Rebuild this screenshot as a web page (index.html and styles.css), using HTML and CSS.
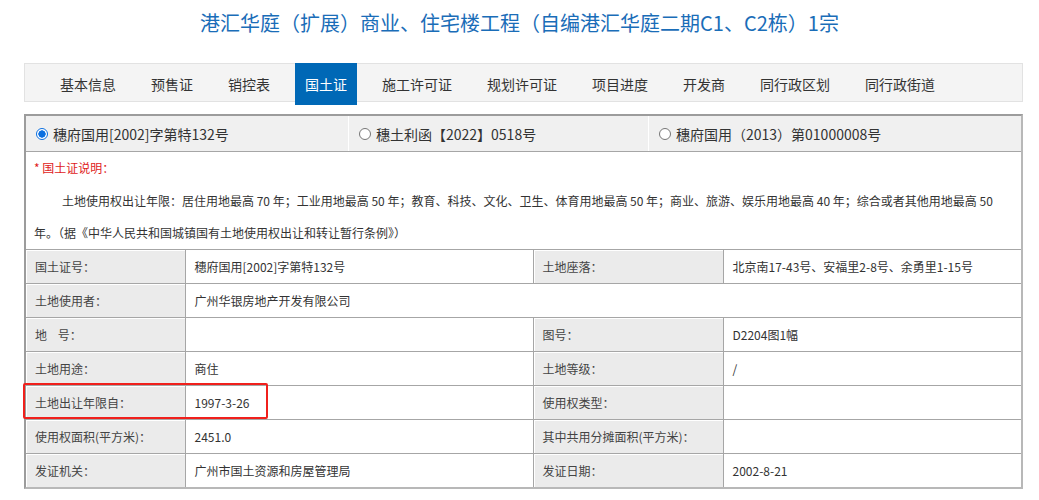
FILE: index.html
```html
<!DOCTYPE html>
<html lang="zh-CN">
<head>
<meta charset="utf-8">
<title>国土证</title>
<link rel="stylesheet" href="styles.css">
</head>
<body>
<h1 class="title">港汇华庭（扩展）商业、住宅楼工程（自编港汇华庭二期C1、C2栋）1宗</h1>

<div class="nav">
  <ul class="tabs">
    <li class="tab">基本信息</li>
    <li class="tab">预售证</li>
    <li class="tab">销控表</li>
    <li class="tab active">国土证</li>
    <li class="tab">施工许可证</li>
    <li class="tab">规划许可证</li>
    <li class="tab">项目进度</li>
    <li class="tab">开发商</li>
    <li class="tab">同行政区划</li>
    <li class="tab">同行政街道</li>
  </ul>
</div>

<div class="cert">
  <div class="radios">
    <label class="opt opt1"><span class="radio checked"></span>穗府国用[2002]字第特132号</label>
    <label class="opt opt2"><span class="radio"></span>穗土利函【2022】0518号</label>
    <label class="opt opt3"><span class="radio"></span>穗府国用（2013）第01000008号</label>
  </div>
  <div class="desc">
    <p class="desc-title">* 国土证说明：</p>
    <p class="desc-text">土地使用权出让年限：居住用地最高 70 年；工业用地最高 50 年；教育、科技、文化、卫生、体育用地最高 50 年；商业、旅游、娱乐用地最高 40 年；综合或者其他用地最高 50 年。（据《中华人民共和国城镇国有土地使用权出让和转让暂行条例》）</p>
  </div>
  <table class="info">
    <colgroup>
      <col class="c1"><col class="c2"><col class="c3"><col class="c4">
    </colgroup>
    <tr>
      <th>国土证号：</th><td>穗府国用[2002]字第特132号</td>
      <th>土地座落：</th><td>北京南17-43号、安福里2-8号、余勇里1-15号</td>
    </tr>
    <tr>
      <th>土地使用者：</th><td colspan="3">广州华银房地产开发有限公司</td>
    </tr>
    <tr>
      <th>地&nbsp;&nbsp;&nbsp;&nbsp;号：</th><td></td>
      <th>图号：</th><td>D2204图1幅</td>
    </tr>
    <tr>
      <th>土地用途：</th><td>商住</td>
      <th>土地等级：</th><td>/</td>
    </tr>
    <tr>
      <th>土地出让年限自：</th><td>1997-3-26</td>
      <th>使用权类型：</th><td></td>
    </tr>
    <tr>
      <th>使用权面积(平方米)：</th><td>2451.0</td>
      <th>其中共用分摊面积(平方米)：</th><td></td>
    </tr>
    <tr>
      <th>发证机关：</th><td>广州市国土资源和房屋管理局</td>
      <th>发证日期：</th><td>2002-8-21</td>
    </tr>
  </table>
  <div class="mark"></div>
</div>
</body>
</html>
```

FILE: styles.css
```css
html, body {
  margin: 0;
  padding: 0;
  background: #fff;
}
body {
  font-family: "Noto Sans CJK JP", "Noto Sans CJK SC", sans-serif;
  color: #333;
}
.title {
  margin: 8px 0 0;
  font-size: 20px;
  font-weight: normal;
  line-height: 30px;
  color: #1a6db8;
  text-align: center;
}
.nav {
  margin: 25px 16px 0 24px;
  height: 37px;
  border: 1px solid #e2e2e2;
  background: #f4f4f4;
}
.tabs {
  list-style: none;
  margin: -1px 0 0;
  padding: 0 0 0 25px;
  display: flex;
  gap: 15px;
}
.tab {
  padding: 0 10px;
  height: 42px;
  line-height: 42px;
  font-size: 14px;
  color: #333;
  white-space: nowrap;
}
.tab.active {
  background: #0068b6;
  color: #fff;
}
.cert {
  position: relative;
  margin: 12px 0 0 24px;
  width: 995px;
  border: 2px solid;
  border-color: #9c9c9c #b8b8b8 #b8b8b8 #9c9c9c;
}
.radios {
  display: flex;
  height: 35px;
  background: #f0f0f0;
  border-bottom: 1px solid #a6a6a6;
}
.opt {
  display: flex;
  align-items: center;
  padding-left: 10px;
  font-size: 14px;
  color: #333;
  border-right: 1px solid #fff;
}
.opt1 { width: 312px; }
.opt2 { width: 289px; }
.opt3 { flex: 1; border-right: 0; }
.radio {
  box-sizing: border-box;
  width: 12px;
  height: 12px;
  margin-right: 5px;
  border: 1px solid #767676;
  border-radius: 50%;
  background: #fff;
}
.radio.checked {
  border: 1px solid #0b6fe0;
  background: radial-gradient(circle, #0b6fe0 0 3.4px, #fff 3.9px);
}
.desc {
  padding: 0 8px;
  height: 97px;
  border-bottom: 1px solid #a6a6a6;
  font-size: 12px;
  line-height: 32.5px;
}
.desc p {
  margin: 0;
}
.desc-title {
  color: #e01b1b;
}
.desc-text {
  text-indent: 28px;
  color: #333;
}
.info {
  width: 100%;
  table-layout: fixed;
  border-collapse: collapse;
  border-style: hidden;
  font-size: 12px;
}
.c1 { width: 159px; }
.c2 { width: 348px; }
.c3 { width: 190px; }
.c4 { width: auto; }
.info th,
.info td {
  height: 33px;
  padding: 0 9px;
  border: 1px solid #a6a6a6;
  text-align: left;
  font-weight: normal;
  white-space: nowrap;
}
.info th {
  background: #ebebeb;
  color: #444;
  box-shadow: inset 1px 1px 0 #fff;
}
.info td {
  color: #333;
}
.mark {
  position: absolute;
  left: -3px;
  top: 267px;
  width: 241px;
  height: 32px;
  border: 2px solid #f0201c;
  border-radius: 2px;
}
```
